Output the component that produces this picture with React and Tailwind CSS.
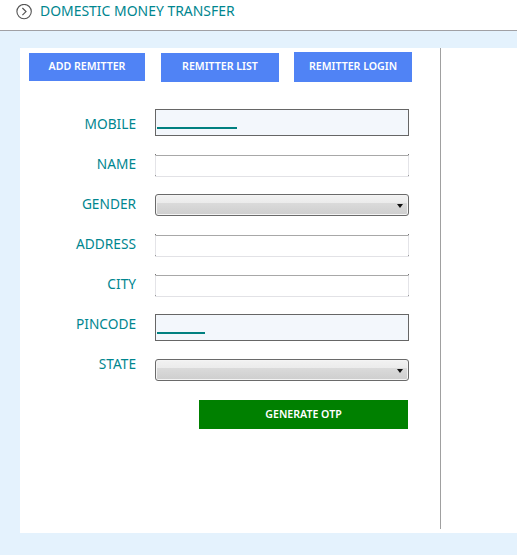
const font = { fontFamily: '"Noto Sans", sans-serif' };

function Label({ children, className = "" }) {
  return (
    <label className={`w-[116px] mr-[19px] text-right text-[13.7px] leading-[20px] text-[#00868f] ${className}`}>
      {children}
    </label>
  );
}

function TextBox() {
  return (
    <div className="relative w-[254px] h-[22px]">
      <input
        type="text"
        className="w-full h-full bg-white border border-t-[#a8a8a8] border-x-[#e4e4e8] border-b-[#e2e2e6] outline-none"
      />
      {/* dark corner pixels */}
      <span className="absolute left-0 top-0 w-px h-px bg-[#777777]" />
      <span className="absolute right-0 top-0 w-px h-px bg-[#777777]" />
      <span className="absolute left-0 bottom-0 w-px h-px bg-[#999999]" />
      <span className="absolute right-0 bottom-0 w-px h-px bg-[#999999]" />
    </div>
  );
}

function ErrorBox({ bar }) {
  return (
    <div className="relative w-[254px] h-[27px]">
      <input
        type="text"
        className="w-full h-full bg-[#f3f7fc] border border-[#666666] outline-none"
      />
      <div className={`absolute left-[2px] bottom-[7px] h-[2px] bg-[#008080] ${bar}`} />
    </div>
  );
}

function SelectBox() {
  return (
    <div className="relative w-[254px] h-[22px]">
      <select className="w-full h-full appearance-none rounded-[3px] border border-[#6a6a6a] outline-none bg-[linear-gradient(to_bottom,#f2f2f2_0%,#ebebeb_41%,#dadada_42%,#cecece_100%)] shadow-[inset_0_0_0_1px_#f4f4f4]"></select>
      <svg className="absolute right-[6px] top-[10px]" width="6" height="4" viewBox="0 0 6 4">
        <path d="M0 0h6L3 4z" fill="#111111" />
      </svg>
    </div>
  );
}

function TabButton({ children, className = "" }) {
  return (
    <button className={`bg-[#5083f5] text-white text-[10.6px] font-semibold ${className}`}>
      {children}
    </button>
  );
}

export default function App() {
  return (
    <div className="w-[517px] h-[555px] overflow-hidden bg-[#e4f2fd]" style={font}>
      {/* header */}
      <div className="h-[31px] bg-white border-b border-[#a0a0a4] flex items-start pl-[16px] pt-[3px]">
        <svg className="mt-px" width="16" height="16" viewBox="0 0 16 16" fill="none" stroke="#555555">
          <circle cx="8.1" cy="7.6" r="7.2" strokeWidth="1.1" />
          <path d="M6.4 4 10 7.6l-3.6 3.6" strokeWidth="1.2" />
        </svg>
        <h1 className="ml-[8px] text-[13.95px] leading-[16px] text-[#00868f]">DOMESTIC MONEY TRANSFER</h1>
      </div>

      {/* panel */}
      <div className="mt-[17px] ml-[20px] h-[485px] bg-white">
        <div className="w-[421px] h-[481px] border-r border-[#a0a0a0]">
          <div className="flex items-center pl-[9px] pt-[4px]">
            <TabButton className="w-[116px] h-[28px]">ADD REMITTER</TabButton>
            <TabButton className="w-[118px] h-[29px] ml-[16px]">REMITTER LIST</TabButton>
            <TabButton className="w-[118px] h-[30px] ml-[15px]">REMITTER LOGIN</TabButton>
          </div>

          <form className="mt-[27px] flex flex-col gap-[18px]">
            <div className="flex items-start">
              <Label className="mt-[5px]">MOBILE</Label>
              <ErrorBox bar="w-[80px]" />
            </div>
            <div className="flex items-start">
              <Label>NAME</Label>
              <TextBox />
            </div>
            <div className="flex items-start">
              <Label>GENDER</Label>
              <SelectBox />
            </div>
            <div className="flex items-start">
              <Label>ADDRESS</Label>
              <TextBox />
            </div>
            <div className="flex items-start">
              <Label>CITY</Label>
              <TextBox />
            </div>
            <div className="flex items-start">
              <Label>PINCODE</Label>
              <ErrorBox bar="w-[48px]" />
            </div>
            <div className="flex items-start">
              <Label className="-mt-[5px]">STATE</Label>
              <SelectBox />
            </div>
            <button className="ml-[179px] mt-[1px] w-[209px] h-[29px] bg-[#008000] text-white text-[10.6px] font-semibold">
              GENERATE OTP
            </button>
          </form>
        </div>
      </div>
    </div>
  );
}
